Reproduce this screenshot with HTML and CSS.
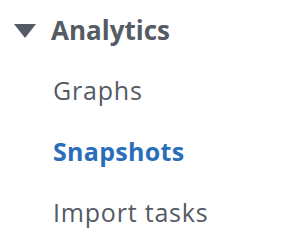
FILE: index.html
```html
<!DOCTYPE html>
<html lang="en">
<head>
  <meta charset="UTF-8" />
  <title>Analytics</title>
  <link rel="stylesheet" href="styles.css">
</head>
<body>

  <nav class="side-nav">
    <div class="section-header">
      <svg class="caret" width="22" height="14" viewBox="0 0 22 14">
        <polygon points="0,0 22,0 11,14" fill="#545b64"/>
      </svg>
      <span class="section-title">Analytics</span>
    </div>

    <ul class="nav-list">
      <li><a href="#" class="nav-link">Graphs</a></li>
      <li><a href="#" class="nav-link active">Snapshots</a></li>
      <li><a href="#" class="nav-link">Import tasks</a></li>
    </ul>
  </nav>

</body>
</html>
```

FILE: styles.css
```css
* {
  box-sizing: border-box;
  margin: 0;
  padding: 0;
}

body {
  font-family: 'Open Sans', 'Noto Sans', Arial, sans-serif;
  background: #ffffff;
  color: #545b64;
}

.side-nav {
  padding: 13px 0 0 14px;
}

.section-header {
  display: flex;
  align-items: center;
  gap: 15px;
  height: 34px;
}

.caret {
  display: block;
  margin-top: 2px;
}

.section-title {
  font-size: 26px;
  font-weight: 700;
}

.nav-list {
  list-style: none;
  padding-left: 39px;
  margin-top: 26px;
}

.nav-list li {
  height: 61px;
}

.nav-link {
  font-size: 25px;
  letter-spacing: 0.8px;
  color: #545b64;
  text-decoration: none;
  line-height: 34px;
}

.nav-link.active {
  color: #2a6ebb;
  font-weight: 700;
  letter-spacing: 0.3px;
}
```
